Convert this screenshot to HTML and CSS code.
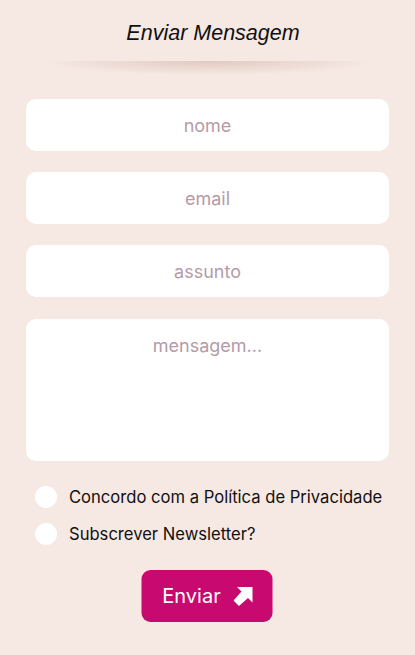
FILE: index.html
```html
<!DOCTYPE html>
<html lang="pt">
<head>
<meta charset="utf-8">
<link rel="stylesheet" href="styles.css">
</head>
<body>
<div class="page">
  <h1 class="title">Enviar Mensagem</h1>
  <div class="divider"></div>
  <form class="form">
    <input class="field" type="text" placeholder="nome">
    <input class="field" type="email" placeholder="email">
    <input class="field" type="text" placeholder="assunto">
    <textarea class="field area" placeholder="mensagem..."></textarea>
    <div class="checks">
      <label class="check"><span class="box"></span><span>Concordo com a Política de Privacidade</span></label>
      <label class="check"><span class="box"></span><span>Subscrever Newsletter?</span></label>
    </div>
    <div class="actions">
      <button class="send" type="button">Enviar
        <svg class="arrow" width="20" height="20" viewBox="0 0 20 20"><path d="M3.5 1 H19 V16.5 L14.5 12 L5.5 20 L0 14.5 L8 5.5 Z" fill="#fff"/></svg>
      </button>
    </div>
  </form>
</div>
</body>
</html>
```
FILE: styles.css
```css
* { box-sizing: border-box; }
html, body { margin: 0; padding: 0; }
body { background: #f6e8e3; font-family: "Liberation Sans", Arial, sans-serif; }
.page { width: 415px; padding: 0 26px 0 26px; }
.title { margin: 0; padding: 20px 0 0 11px; font-size: 21.5px; line-height: 26px; font-style: italic; font-weight: normal; text-align: center; color: #111; }
.divider { margin: 15px 14px 0 18px; height: 14px; background: radial-gradient(ellipse 50% 100% at 50% 0%, rgba(190,150,135,0.38), rgba(190,150,135,0) 100%); }
.form { display: flex; flex-direction: column; gap: 21px; margin-top: 24px; }
.field { display: block; width: 100%; height: 52px; border: none; border-radius: 10px; background: #fff; font-family: "Inter", sans-serif; font-size: 18px; text-align: center; color: #333; outline: none; padding: 0 12px; }
.field::placeholder { color: #b59ba7; }
.area { height: 142px; resize: none; padding-top: 16px; line-height: 22px; margin-top: 1px; }
.checks { display: flex; flex-direction: column; gap: 15px; padding-left: 9px; margin-top: 4px; }
.check { display: flex; align-items: center; gap: 12px; font-family: "Inter", sans-serif; font-size: 16.6px; color: #111; height: 22px; }
.box { width: 22px; height: 22px; border-radius: 50%; background: #fff; flex: none; }
.actions { display: flex; justify-content: center; margin-top: 4px; }
.send { display: flex; align-items: center; gap: 13px; height: 52px; padding: 0 19px 0 21px; border: none; border-radius: 9px; background: #c8096f; color: #fff; font-family: "Inter", sans-serif; font-size: 20px; transform: translateX(-0.5px); }
.arrow { display: block; }
```
